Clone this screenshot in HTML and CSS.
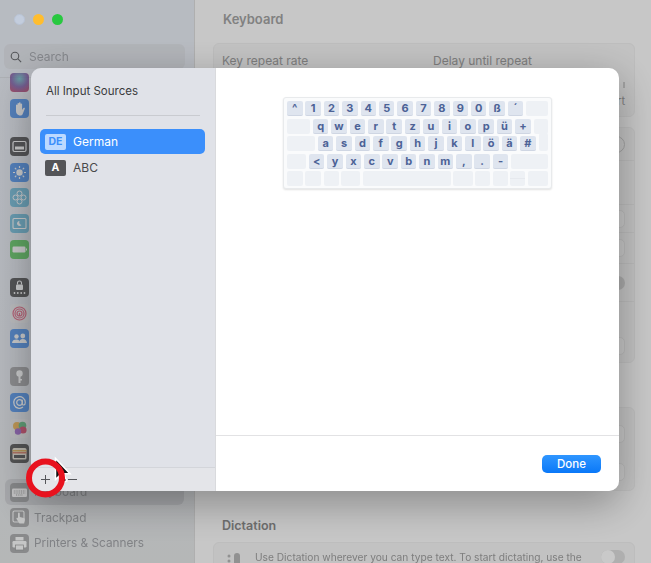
FILE: index.html
```html
<!DOCTYPE html>
<html lang="en">
<head>
    <meta charset="UTF-8">
    <meta name="viewport" content="width=device-width, initial-scale=1.0">
    <title>Keyboard - Input Sources</title>
    <link rel="stylesheet" href="styles.css">
</head>
<body>
    <div class="window">
        <aside class="sidebar">
            <div class="sidebar-head">
                <div class="traffic">
                    <span class="light light-close"></span>
                    <span class="light light-min"></span>
                    <span class="light light-max"></span>
                </div>
                <div class="search">
                    <svg class="search-icon" viewBox="0 0 14 14"><circle cx="5.8" cy="5.8" r="4.4"/><path d="M9 9l4 4"/></svg>
                    <span>Search</span>
                </div>
            </div>

            <div class="side-list">
                <div class="side-group">
                    <div class="side-item"><span class="app app-siri"></span></div>
                    <div class="side-item"><span class="app app-blue">
                        <svg viewBox="0 0 19 19"><path d="M6 10V6a.8.8 0 0 1 1.5 0v3V4.500a.8.8 0 0 1 1.5 0V9V4a.8.8 0 0 1 1.6 0v5V5a.8.8 0 0 1 1.5 0v6l1.300-2a.8.8 0 0 1 1.300 1l-2 5c-.5 1-1.300 1.500-2.500 1.500H9.500C7 16 6 14 6 12z" fill="#fff"/></svg>
                    </span></div>
                </div>
                <div class="side-group">
                    <div class="side-item"><span class="app app-dark">
                        <svg viewBox="0 0 19 19"><rect x="3" y="4.500" width="13" height="10" rx="1.500" fill="none" stroke="#fff" stroke-width="1.200"/><rect x="5" y="9.500" width="9" height="3" fill="#fff"/></svg>
                    </span></div>
                    <div class="side-item"><span class="app app-blue">
                        <svg viewBox="0 0 19 19"><circle cx="9.500" cy="9.500" r="3.200" fill="#fff"/><path d="M9.500 3v2M9.500 14v2M3 9.500h2M14 9.500h2M4.900 4.900l1.400 1.400M12.700 12.700l1.400 1.400M4.900 14.100l1.400-1.400M12.700 6.300l1.400-1.400" stroke="#fff" stroke-width="1.200"/></svg>
                    </span></div>
                    <div class="side-item"><span class="app app-teal">
                        <svg viewBox="0 0 19 19"><g fill="none" stroke="#fff" stroke-width="1"><circle cx="9.500" cy="5.500" r="2.500"/><circle cx="9.500" cy="13.500" r="2.500"/><circle cx="5.500" cy="9.500" r="2.500"/><circle cx="13.500" cy="9.500" r="2.500"/></g></svg>
                    </span></div>
                    <div class="side-item"><span class="app app-teal">
                        <svg viewBox="0 0 19 19"><rect x="3" y="4.500" width="13" height="10" rx="1" fill="none" stroke="#fff" stroke-width="1.100"/><path d="M9.500 7a2.500 2.500 0 1 0 2 4 2.800 2.800 0 0 1-2-4z" fill="#fff"/></svg>
                    </span></div>
                    <div class="side-item"><span class="app app-green">
                        <svg viewBox="0 0 19 19"><rect x="2.500" y="6.500" width="13" height="6" rx="1.200" fill="#fff"/><rect x="16" y="8.500" width="1" height="2" fill="#fff"/></svg>
                    </span></div>
                </div>
                <div class="side-group">
                    <div class="side-item"><span class="app app-dark">
                        <svg viewBox="0 0 19 19"><rect x="6" y="6.500" width="7" height="5.500" rx="1" fill="#fff"/><path d="M7.500 6.500V5a2 2 0 0 1 4 0v1.500" fill="none" stroke="#fff" stroke-width="1.100"/><g fill="#fff"><circle cx="4.500" cy="15" r=".9"/><circle cx="7.800" cy="15" r=".9"/><circle cx="11.200" cy="15" r=".9"/><circle cx="14.500" cy="15" r=".9"/></g></svg>
                    </span></div>
                    <div class="side-item"><span class="app app-light">
                        <svg viewBox="0 0 19 19"><g fill="none" stroke="#e2607e" stroke-width="1.200"><circle cx="9.500" cy="9.500" r="6.500"/><circle cx="9.500" cy="9.500" r="4.500"/><circle cx="9.500" cy="9.500" r="2.500"/><path d="M9.500 9v3"/></g></svg>
                    </span></div>
                    <div class="side-item"><span class="app app-blue">
                        <svg viewBox="0 0 19 19"><g fill="#fff"><circle cx="6.500" cy="7.500" r="2.200"/><circle cx="12.800" cy="7" r="2.400"/><path d="M2 14c0-2.500 2-3.500 4.500-3.500S10 12 10 14z"/><path d="M9 14c.3-2.700 1.600-4 3.800-4s4 1.300 4.200 4z"/></g></svg>
                    </span></div>
                </div>
                <div class="side-group">
                    <div class="side-item"><span class="app app-grey">
                        <svg viewBox="0 0 19 19"><circle cx="9.500" cy="6.500" r="3.200" fill="#fff"/><path d="M8.500 9h2v7h-2zM10 12h2v1.500h-2z" fill="#fff"/></svg>
                    </span></div>
                    <div class="side-item"><span class="app app-blue">
                        <svg viewBox="0 0 19 19"><circle cx="9.500" cy="9.500" r="2.800" fill="none" stroke="#fff" stroke-width="1.200"/><path d="M12.300 6.700v4c0 2 3 1.800 3-1.200a5.800 5.800 0 1 0-2.300 4.600" fill="none" stroke="#fff" stroke-width="1.200"/></svg>
                    </span></div>
                    <div class="side-item"><span class="app app-light">
                        <svg viewBox="0 0 19 19"><circle cx="7" cy="7" r="4" fill="#f0b24a"/><circle cx="12.500" cy="6.500" r="3.800" fill="#5dbb7d"/><circle cx="13" cy="11" r="3.600" fill="#d8446a"/><circle cx="8" cy="12.500" r="3.200" fill="#9a62c8"/></svg>
                    </span></div>
                    <div class="side-item"><span class="app app-dark">
                        <svg viewBox="0 0 19 19"><rect x="2.500" y="4" width="14" height="11.500" rx="1.500" fill="#e8e2d2"/><rect x="2.500" y="6" width="14" height="1.500" fill="#e0b050"/><rect x="2.500" y="8" width="14" height="1.500" fill="#d87860"/><rect x="4" y="11" width="11" height="3" fill="#4a4a4a"/></svg>
                    </span></div>
                </div>
                <div class="side-group">
                    <div class="side-item side-item-active"><span class="app app-grey">
                        <svg viewBox="0 0 19 19"><rect x="2" y="5.500" width="15" height="8.500" rx="1.200" fill="#fff"/><path d="M3.800 8h11.400M3.800 10h11.400M6 12h7" stroke="#8a8a8a" stroke-width=".8" stroke-dasharray="1 .8"/></svg>
                    </span>Keyboard</div>
                    <div class="side-item"><span class="app app-grey">
                        <svg viewBox="0 0 19 19"><rect x="3" y="3" width="11" height="11" rx="1.500" fill="none" stroke="#fff" stroke-width="1.100"/><path d="M8 8V5.500a.9.900 0 0 1 1.800 0V9l4 1c1 .3 1.200 1 1 2l-.6 3.500H9.500L6.500 11c-.5-1 .7-1.800 1.500-1z" fill="#fff"/></svg>
                    </span>Trackpad</div>
                    <div class="side-item"><span class="app app-grey">
                        <svg viewBox="0 0 19 19"><rect x="5.500" y="3" width="8" height="3.500" fill="#fff"/><rect x="2.500" y="7" width="14" height="6.500" rx="1.200" fill="#fff"/><rect x="5.500" y="11" width="8" height="5" fill="#fff" stroke="#8a8a8a" stroke-width=".7"/></svg>
                    </span>Printers &amp; Scanners</div>
                </div>
            </div>
        </aside>

        <main class="content">
            <h2 class="page-title">Keyboard</h2>
            <section class="panel panel-repeat">
                <div class="repeat-labels">
                    <span>Key repeat rate</span>
                    <span>Delay until repeat</span>
                </div>
                <div class="repeat-tick"></div>
                <div class="repeat-end">Short</div>
            </section>
            <section class="panel panel-settings">
                <div class="set-row set-row-first"><span class="radio-knob"></span></div>
                <div class="set-row set-row-gap"></div>
                <div class="set-row set-row-a"><span class="set-btn"></span></div>
                <div class="set-row set-row-b"><span class="set-btn"></span></div>
                <div class="set-row set-row-toggle"><span class="grey-knob"></span></div>
                <div class="set-row set-row-last"><span class="set-btn"></span></div>
            </section>
            <section class="panel panel-extra">
                <span class="set-btn"></span>
                <span class="set-btn"></span>
            </section>
            <h3 class="section-title">Dictation</h3>
            <section class="panel panel-dictation">
                <svg class="mic" viewBox="0 0 22 22"><rect x="9" y="3" width="6" height="14" rx="3"/><circle cx="4" cy="6" r="1.500"/><circle cx="4" cy="11" r="1.500"/><circle cx="4" cy="16" r="1.500"/></svg>
                <p>Use Dictation wherever you can type text. To start dictating, use the</p>
                <span class="toggle"></span>
            </section>
        </main>

        <div class="scrim"></div>

        <div class="sheet">
            <div class="sources">
                <div class="sources-title">All Input Sources</div>
                <div class="source source-selected">
                    <span class="badge">DE</span>German
                </div>
                <div class="source">
                    <span class="badge">A</span>ABC
                </div>
                <div class="sources-foot">
                    <svg class="foot-icon" viewBox="0 0 11 11"><path d="M5.500 1v9M1 5.500h9"/></svg>
                    <svg class="foot-icon" viewBox="0 0 11 11"><path d="M1 5.500h9"/></svg>
                </div>
            </div>
            <div class="preview">
                <div class="preview-body">
                    <div class="kb">
                        <div class="kb-row">
                            <span class="key">^</span><span class="key">1</span><span class="key">2</span><span class="key">3</span><span class="key">4</span><span class="key">5</span><span class="key">6</span><span class="key">7</span><span class="key">8</span><span class="key">9</span><span class="key">0</span><span class="key">ß</span><span class="key">´</span><span class="key key-blank key-fill"></span>
                        </div>
                        <div class="kb-row">
                            <span class="key key-blank key-tab"></span><span class="key">q</span><span class="key">w</span><span class="key">e</span><span class="key">r</span><span class="key">t</span><span class="key">z</span><span class="key">u</span><span class="key">i</span><span class="key">o</span><span class="key">p</span><span class="key">ü</span><span class="key">+</span><span class="key key-blank key-fill"></span>
                        </div>
                        <div class="kb-row">
                            <span class="key key-blank key-caps"></span><span class="key">a</span><span class="key">s</span><span class="key">d</span><span class="key">f</span><span class="key">g</span><span class="key">h</span><span class="key">j</span><span class="key">k</span><span class="key">l</span><span class="key">ö</span><span class="key">ä</span><span class="key">#</span><span class="key key-blank key-fill key-enter"></span>
                        </div>
                        <div class="kb-row">
                            <span class="key key-blank key-shift"></span><span class="key">&lt;</span><span class="key">y</span><span class="key">x</span><span class="key">c</span><span class="key">v</span><span class="key">b</span><span class="key">n</span><span class="key">m</span><span class="key">,</span><span class="key">.</span><span class="key">-</span><span class="key key-blank key-fill"></span>
                        </div>
                        <div class="kb-row kb-row-bottom">
                            <span class="key key-blank key-m16"></span><span class="key key-blank key-m16"></span><span class="key key-blank key-m15"></span><span class="key key-blank key-m19"></span><span class="key key-blank key-space"></span><span class="key key-blank key-m20"></span><span class="key key-blank key-m15"></span><span class="key key-blank key-m15"></span><span class="key key-blank key-m15 key-arrows"></span><span class="key key-blank key-fill"></span>
                        </div>
                    </div>
                </div>
                <div class="preview-foot">
                    <button class="done-btn">Done</button>
                </div>
            </div>
        </div>

        <svg class="marker" viewBox="0 0 60 60">
            <path d="M34.500 5.500v21l4.800-4.600 3.300 7.300 3.200-1.400-3.200-7h6.400z" fill="#111" stroke="#fff" stroke-width="1.500"/>
            <circle cx="24.500" cy="25" r="16.500" fill="none" stroke="#e8121e" stroke-width="6"/>
        </svg>
    </div>
</body>
</html>
```

FILE: styles.css
```css
* {
    margin: 0;
    padding: 0;
    box-sizing: border-box;
}

body {
    font-family: Inter, 'Liberation Sans', sans-serif;
    overflow: hidden;
}

.window {
    position: relative;
    width: 651px;
    height: 563px;
    display: flex;
    overflow: hidden;
    background: #fdfdfd;
}

/* sidebar */

.sidebar {
    width: 195px;
    flex-shrink: 0;
    height: 563px;
    overflow: hidden;
    background: linear-gradient(180deg, #eaeef6 0%, #e4e8ef 60%, #e6e8e9 100%);
    border-right: 1px solid #dedede;
}

.sidebar-head {
    position: relative;
    height: 78px;
    padding: 19px 4px 0 4px;
    background: #e9edf5;
    border-bottom: 1px solid #dcdfe5;
}

.traffic {
    display: flex;
    gap: 8px;
    padding-left: 10px;
    position: relative;
    z-index: 5;
}

.light {
    width: 11px;
    height: 11px;
    border-radius: 50%;
    margin-top: -5px;
}

.light-close {
    background: #c3cddd;
    border: 1px solid #b7c2d4;
}

.light-min {
    background: #ffbd2e;
}

.light-max {
    background: #28c840;
}

.search {
    margin-top: 19px;
    width: 181px;
    height: 25px;
    border-radius: 6px;
    background: #e1e4ea;
    display: flex;
    align-items: center;
    gap: 7px;
    padding-left: 6px;
    font-size: 12px;
    color: #a9acb2;
    filter: blur(0.4px);
}

.search-icon {
    width: 12px;
    height: 12px;
    fill: none;
    stroke: #6c6e72;
    stroke-width: 1.300;
}

.side-list {
    margin-top: -8px;
    padding: 0 5px;
    display: flex;
    flex-direction: column;
    gap: 12.4px;
    filter: blur(0.5px);
}

.side-item {
    height: 25.7px;
    display: flex;
    align-items: center;
    gap: 5px;
    padding-left: 5px;
    border-radius: 6px;
    font-size: 11.8px;
    color: #a3a5a9;
}

.side-item-active {
    background: #d2d4d8;
    margin-right: 5px;
}

.app {
    width: 19px;
    height: 19px;
    border-radius: 4px;
    flex-shrink: 0;
    display: block;
    opacity: 0.8;
}

.app svg {
    display: block;
    width: 19px;
    height: 19px;
}

.app-siri {
    background: radial-gradient(circle at 50% 30%, #6cc0c8 0%, #7a5aa8 50%, #c83c60 100%);
}

.app-blue {
    background: #4a90ec;
}

.app-dark {
    background: #4a4a4c;
}

.app-teal {
    background: #6cbbda;
}

.app-green {
    background: #5cc85e;
}

.app-grey {
    background: #a0a1a3;
}

.app-light {
    background: #ececee;
}

/* settings behind the sheet */

.content {
    flex: 1;
    min-width: 0;
    padding: 0 16px 0 18px;
    background: #fdfdfd;
    filter: blur(0.4px);
}

.page-title {
    height: 43px;
    padding: 11px 0 0 10px;
    font-size: 13px;
    line-height: 16px;
    font-weight: 600;
    color: #a4a4a4;
}

.panel {
    background: #f6f6f6;
    border: 1px solid #f0f0f0;
    border-radius: 6px;
}

.panel-repeat {
    height: 74px;
    padding: 9px 9px 0 8px;
}

.repeat-labels {
    display: flex;
    font-size: 12px;
    line-height: 15px;
    color: #a0a0a0;
}

.repeat-labels span {
    width: 211px;
    flex-shrink: 0;
}

.repeat-tick {
    width: 2px;
    height: 6px;
    background: #cfcfcf;
    margin: 14px 0 0 auto;
}

.repeat-end {
    text-align: right;
    font-size: 11px;
    line-height: 13px;
    margin-top: 7px;
    color: #a0a0a0;
}

.panel-settings {
    height: 236px;
    margin-top: 10px;
    display: flex;
    flex-direction: column;
}

.set-row {
    display: flex;
    justify-content: flex-end;
    align-items: center;
    padding-right: 9px;
    border-bottom: 1px solid #ececec;
}

.set-row-first {
    height: 33px;
}

.set-row-gap {
    height: 44px;
}

.set-row-a {
    height: 28px;
}

.set-row-b {
    height: 31px;
}

.set-row-toggle {
    height: 38px;
}

.set-row-last {
    flex: 1;
    align-items: flex-start;
    padding-top: 35px;
    border-bottom: none;
}

.radio-knob {
    width: 17px;
    height: 17px;
    border: 1px solid #cfcfcf;
    border-radius: 50%;
}

.grey-knob {
    width: 14px;
    height: 14px;
    background: #d8d8d8;
    border-radius: 50%;
}

.set-btn {
    display: block;
    width: 30px;
    height: 18px;
    background: #fdfdfd;
    border: 1px solid #ececec;
    border-radius: 5px;
}

.panel-extra {
    height: 84px;
    margin-top: 44px;
    padding: 17px 9px 0 0;
    display: flex;
    flex-direction: column;
    align-items: flex-end;
    gap: 20px;
}

.section-title {
    height: 51px;
    padding: 27px 0 0 9px;
    font-size: 12.5px;
    line-height: 16px;
    font-weight: 600;
    color: #8c8c8c;
}

.panel-dictation {
    height: 60px;
    padding: 7px 9px 0 11px;
    display: flex;
    align-items: flex-start;
    gap: 8px;
}

.mic {
    width: 22px;
    height: 22px;
    fill: #b8b8b8;
    flex-shrink: 0;
}

.panel-dictation p {
    flex: 1;
    min-width: 0;
    font-size: 10.2px;
    line-height: 14px;
    white-space: nowrap;
    color: #a0a0a0;
}

.toggle {
    width: 24px;
    height: 14px;
    border-radius: 7px;
    background: #dedede;
    flex-shrink: 0;
    position: relative;
}

.toggle::after {
    content: "";
    position: absolute;
    left: 0;
    top: 0;
    width: 14px;
    height: 14px;
    border-radius: 50%;
    background: #fff;
}

/* dimmed layer and sheet */

.scrim {
    position: absolute;
    inset: 0;
    background: rgba(0, 0, 0, 0.21);
}

.sheet {
    position: absolute;
    left: 31px;
    top: 68px;
    width: 588px;
    height: 423px;
    display: flex;
    border-radius: 10px 10px 10px 0;
    overflow: hidden;
    box-shadow: 0 12px 40px rgba(0, 0, 0, 0.32);
}

.sources {
    width: 185px;
    flex-shrink: 0;
    display: flex;
    flex-direction: column;
    padding: 0 10px 0 9px;
    background: #e0e2e8;
    border-right: 1px solid #d9dadd;
}

.sources-title {
    margin: 0 5px 13px 6px;
    height: 48px;
    padding-top: 16px;
    font-size: 11.5px;
    line-height: 14px;
    color: #3a3a3c;
    border-bottom: 1px solid #c9cbd0;
}

.source {
    height: 25px;
    margin-bottom: 1px;
    display: flex;
    align-items: center;
    gap: 7px;
    padding-left: 5px;
    border-radius: 5px;
    font-size: 12px;
    color: #48484a;
}

.source-selected {
    background: #3b8ffb;
    color: #fff;
}

.badge {
    width: 21px;
    height: 16px;
    border-radius: 2px;
    background: #545558;
    color: #fff;
    font-size: 10.5px;
    font-weight: 700;
    line-height: 16px;
    text-align: center;
}

.source-selected .badge {
    background: #bcd9ff;
    color: #3b8ffb;
}

.sources-foot {
    margin: auto -10px 0 -9px;
    height: 24px;
    padding: 0 0 1px 9px;
    display: flex;
    align-items: center;
    gap: 16px;
    background: #e4e5e9;
    border-top: 1px solid #d3d5da;
}

.foot-icon {
    width: 11px;
    height: 11px;
    fill: none;
    stroke: #55565a;
    stroke-width: 1;
}

.preview {
    flex: 1;
    display: flex;
    flex-direction: column;
    background: #fff;
}

.preview-body {
    flex: 1;
    padding-top: 29px;
    display: flex;
    justify-content: center;
}

.kb {
    width: 269px;
    height: 92px;
    padding: 3px;
    display: flex;
    flex-direction: column;
    gap: 2.6px;
    background: #fafbfc;
    border: 1px solid #e8eaec;
    border-radius: 3px;
    box-shadow: 0 1px 2px rgba(0, 0, 0, 0.12);
}

.kb-row {
    display: flex;
    gap: 2.9px;
    height: 15px;
    flex-shrink: 0;
}

.kb-row-bottom {
    gap: 2.4px;
}

.key {
    flex: 0 0 15.5px;
    height: 15px;
    background: #dfe5ef;
    border-bottom: 1px solid #cfd6e3;
    border-radius: 2px;
    font-size: 11px;
    font-weight: 700;
    line-height: 14px;
    text-align: center;
    color: #4c6296;
}

.key-blank {
    background: #eef1f5;
    border-bottom: none;
}

.key-fill {
    flex: 1;
}

.key-enter {
    height: 18px;
    margin-top: -3px;
}

.key-tab {
    flex-basis: 23px;
}

.key-caps {
    flex-basis: 28px;
}

.key-shift {
    flex-basis: 19px;
}

.key-m15 {
    flex-basis: 15px;
}

.key-m16 {
    flex-basis: 16px;
}

.key-m19 {
    flex-basis: 19px;
}

.key-m20 {
    flex-basis: 20px;
}

.key-space {
    flex-basis: 88px;
}

.key-arrows {
    background: linear-gradient(180deg, #eef1f5 46%, #e6e9ee 46%, #e6e9ee 54%, #eef1f5 54%);
}

.preview-foot {
    height: 56px;
    flex-shrink: 0;
    display: flex;
    justify-content: flex-end;
    padding: 19px 18px 0 0;
    border-top: 1px solid #e2e2e4;
}

.done-btn {
    width: 59px;
    height: 18px;
    border: none;
    border-radius: 5px;
    background: linear-gradient(180deg, #2f96ff 0%, #0a78f8 100%);
    color: #fff;
    font-family: inherit;
    font-size: 11.5px;
    font-weight: 500;
    line-height: 18px;
}

/* red annotation and pointer */

.marker {
    position: absolute;
    left: 21px;
    top: 453px;
    width: 60px;
    height: 60px;
}
```
